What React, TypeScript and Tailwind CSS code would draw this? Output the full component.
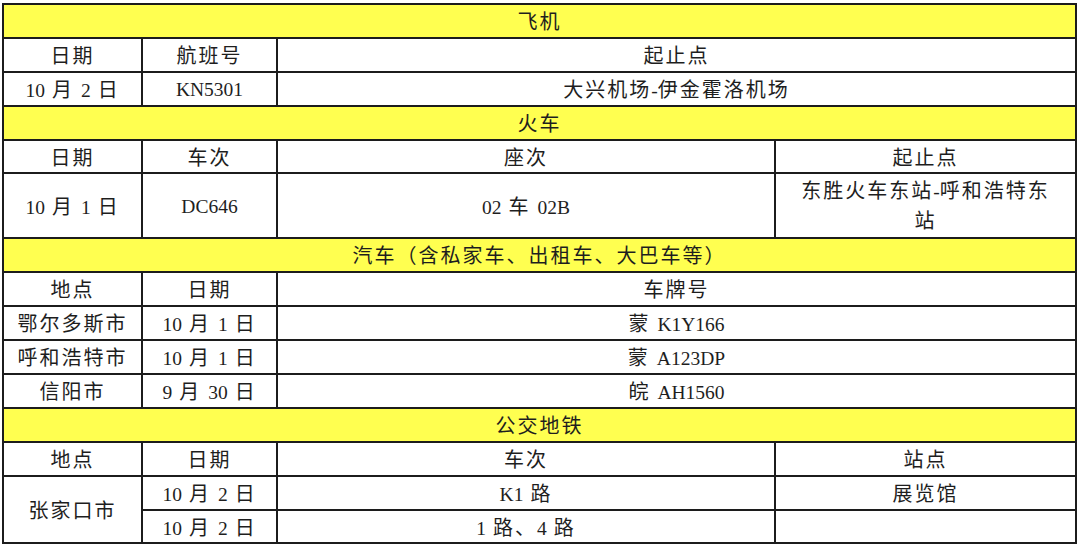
import React from "react";

const CJK = /([\u3000-\u303f\u4e00-\u9fff\uff00-\uffef]+)/;

function Latin({ s }: { s: string }) {
  const bits = s.split(/( )/).filter((b) => b.length > 0);
  return (
    <>
      {bits.map((b, i) =>
        b === " " ? (
          <span key={i} className="inline-block w-[7px]" />
        ) : (
          <span key={i} className="font-['Liberation_Serif',serif] text-[19.5px] tracking-normal">
            {b}
          </span>
        )
      )}
    </>
  );
}

function T({ s }: { s: string }) {
  const parts = s.split(CJK).filter((p) => p.length > 0);
  return (
    <>
      {parts.map((p, i) =>
        CJK.test(p) ? (
          <span key={i} className="font-['Noto_Sans_CJK_SC',sans-serif] text-[20px] tracking-[2px]">
            {p}
          </span>
        ) : (
          <Latin key={i} s={p} />
        )
      )}
    </>
  );
}

const base = "border-2 border-[#1c1c1c] text-center align-middle p-0 text-[#1e1e1e]";
const cell = base + " pt-[2px] leading-[24px]";
const head = cell + " bg-[#ffff50]";

function Section({ title }: { title: string }) {
  return (
    <tr className="h-[34px]">
      <td colSpan={4} className={head}>
        <T s={title} />
      </td>
    </tr>
  );
}

function Row({ cells, h = "h-[34px]" }: { cells: (string | [string, number])[]; h?: string }) {
  return (
    <tr className={h}>
      {cells.map((c, i) =>
        Array.isArray(c) ? (
          <td key={i} colSpan={c[1]} className={cell}>
            <T s={c[0]} />
          </td>
        ) : (
          <td key={i} className={cell}>
            <T s={c} />
          </td>
        )
      )}
    </tr>
  );
}

export default function App() {
  return (
    <div className="w-[1080px] h-[547px] bg-white pt-[3px] pl-[2px]">
      <table className="border-collapse table-fixed w-[1073px]">
        <colgroup>
          <col className="w-[139px]" />
          <col className="w-[135px]" />
          <col className="w-[498px]" />
          <col className="w-[301px]" />
        </colgroup>
        <tbody>
          <Section title="飞机" />
          <Row cells={["日期", "航班号", ["起止点", 2]]} />
          <Row cells={["10 月 2 日", "KN5301", ["大兴机场-伊金霍洛机场", 2]]} />
          <Section title="火车" />
          <Row h="h-[33px]" cells={["日期", "车次", "座次", "起止点"]} />
          <tr className="h-[65px]">
            <td className={cell}><T s="10 月 1 日" /></td>
            <td className={cell}><T s="DC646" /></td>
            <td className={cell}><T s="02 车 02B" /></td>
            <td className={base + " px-[16px] leading-[28px]"}><T s="东胜火车东站-呼和浩特东站" /></td>
          </tr>
          <Section title="汽车（含私家车、出租车、大巴车等）" />
          <Row cells={["地点", "日期", ["车牌号", 2]]} />
          <Row cells={["鄂尔多斯市", "10 月 1 日", ["蒙 K1Y166", 2]]} />
          <Row cells={["呼和浩特市", "10 月 1 日", ["蒙 A123DP", 2]]} />
          <Row cells={["信阳市", "9 月 30 日", ["皖 AH1560", 2]]} />
          <Section title="公交地铁" />
          <Row cells={["地点", "日期", "车次", "站点"]} />
          <tr className="h-[34px]">
            <td rowSpan={2} className={cell}><T s="张家口市" /></td>
            <td className={cell}><T s="10 月 2 日" /></td>
            <td className={cell}><T s="K1 路" /></td>
            <td className={cell}><T s="展览馆" /></td>
          </tr>
          <tr className="h-[33px]">
            <td className={cell}><T s="10 月 2 日" /></td>
            <td className={cell}><T s="1 路、4 路" /></td>
            <td className={cell}></td>
          </tr>
        </tbody>
      </table>
    </div>
  );
}
